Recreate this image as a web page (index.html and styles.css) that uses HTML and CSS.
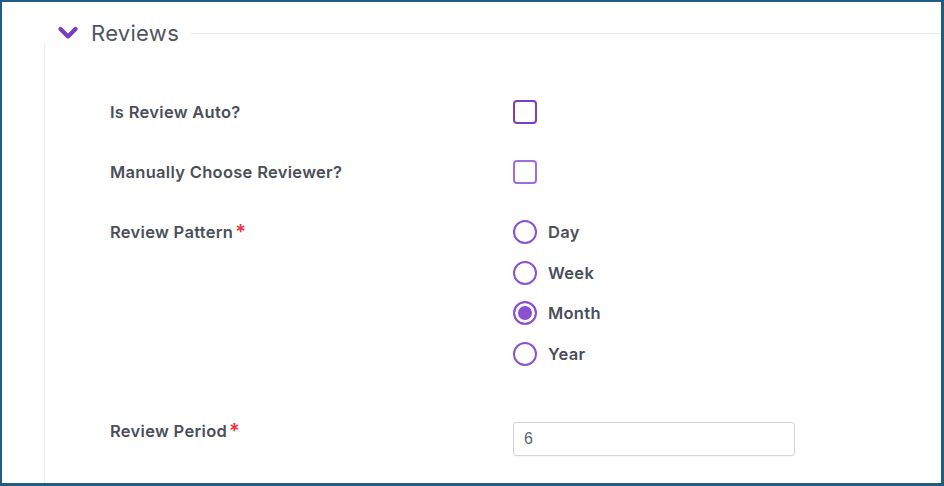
FILE: index.html
```html
<!DOCTYPE html>
<html lang="en">
<head>
    <meta charset="UTF-8" />
    <title>Reviews</title>
    <link rel="stylesheet" href="styles.css">
</head>
<body>

<div class="frame">
    <!-- Section header -->
    <div class="section-head">
        <svg class="chevron" width="20" height="14" viewBox="0 0 20 14">
            <path d="M2.5 3 L10 10.5 L17.5 3" fill="none" stroke="#7a3dc1" stroke-width="4.2" stroke-linecap="round" stroke-linejoin="round" />
        </svg>
        <h2 class="section-title">Reviews</h2>
        <div class="section-rule"></div>
    </div>

    <div class="section-body">
        <div class="form-grid">
            <label class="field-label" for="reviewAuto">Is Review Auto?</label>
            <div class="field-control">
                <input type="checkbox" class="check" id="reviewAuto">
            </div>

            <label class="field-label" for="chooseReviewer">Manually Choose Reviewer?</label>
            <div class="field-control">
                <input type="checkbox" class="check check-light" id="chooseReviewer">
            </div>

            <div class="field-label">Review Pattern<span class="req">*</span></div>
            <div class="field-control radio-list">
                <label class="radio-item"><input type="radio" name="pattern" class="radio"> Day</label>
                <label class="radio-item"><input type="radio" name="pattern" class="radio"> Week</label>
                <label class="radio-item"><input type="radio" name="pattern" class="radio" checked> Month</label>
                <label class="radio-item"><input type="radio" name="pattern" class="radio"> Year</label>
            </div>

            <label class="field-label period-label" for="period">Review Period<span class="req">*</span></label>
            <div class="field-control">
                <input type="text" class="text-input" id="period" value="6">
            </div>
        </div>
    </div>
</div>

</body>
</html>
```

FILE: styles.css
```css
* {
    box-sizing: border-box;
    margin: 0;
    padding: 0;
}

body {
    background: #ffffff;
    font-family: 'Inter', 'Liberation Sans', sans-serif;
}

.frame {
    width: 944px;
    height: 486px;
    border: 2px solid #1f5e80;
    border-right-width: 3px;
    border-bottom-width: 3px;
    overflow: hidden;
    background: #ffffff;
}

.section-head {
    display: flex;
    align-items: center;
    height: 26px;
    margin-top: 18px;
    padding-left: 56px;
}

.chevron {
    display: block;
    margin-right: 13px;
}

.section-title {
    font-size: 22px;
    font-weight: 400;
    color: #4e5562;
    letter-spacing: 0.3px;
}

.section-rule {
    flex: 1;
    border-top: 1px solid #e4ecef;
    margin-left: 12px;
    margin-top: 1px;
}

.section-body {
    margin-left: 42px;
    margin-top: -2px;
    height: 460px;
    border-left: 1px solid #e6edf1;
    padding: 56px 0 0 65px;
}

.form-grid {
    display: grid;
    grid-template-columns: 403px 300px;
    row-gap: 36px;
    align-items: start;
}

.field-label {
    font-size: 16.5px;
    font-weight: 600;
    color: #4a4f59;
    line-height: 24px;
    letter-spacing: 0.3px;
}

.req {
    color: #ee2f3d;
    font-size: 20px;
    margin-left: 2px;
    vertical-align: top;
    line-height: 24px;
}

.period-label {
    margin-top: 17px;
}

.check {
    appearance: none;
    display: block;
    width: 24px;
    height: 24px;
    border: 2px solid #7b3dc6;
    border-radius: 4px;
    background: #ffffff;
}

.check-light {
    border-color: #9a6de3;
}

.radio-list {
    display: flex;
    flex-direction: column;
    gap: 16.5px;
}

.radio-item {
    display: flex;
    align-items: center;
    gap: 11px;
    font-size: 16.5px;
    font-weight: 600;
    color: #4a4f59;
    line-height: 24px;
    letter-spacing: 0.3px;
}

.radio {
    appearance: none;
    display: block;
    width: 24px;
    height: 24px;
    border: 2px solid #8b52d2;
    border-radius: 50%;
    background: #ffffff;
}

.radio:checked {
    background: #8a50d0;
    box-shadow: inset 0 0 0 3px #ffffff;
}

.text-input {
    display: block;
    width: 282px;
    height: 34px;
    margin-top: 20px;
    border: 1px solid #d3d3d3;
    border-radius: 3px;
    padding: 0 10px;
    font-family: 'Liberation Sans', sans-serif;
    font-size: 16px;
    color: #5f6470;
    box-shadow: 0 1px 1px rgba(0, 0, 0, 0.04);
}
```
